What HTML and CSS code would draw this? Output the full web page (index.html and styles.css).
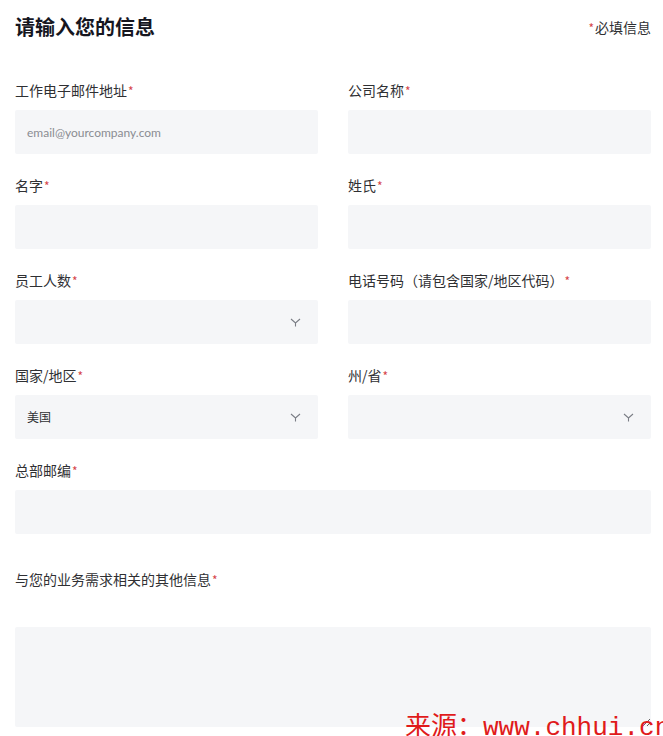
FILE: index.html
```html
<!DOCTYPE html>
<html lang="zh-CN">
<head>
    <meta charset="UTF-8">
    <meta name="viewport" content="width=device-width, initial-scale=1.0">
    <title>请输入您的信息</title>
    <link rel="stylesheet" href="styles.css">
</head>
<body>
    <form class="info-form">
        <div class="form-head">
            <h1>请输入您的信息</h1>
            <span class="required-note"><i>*</i>必填信息</span>
        </div>

        <div class="form-grid">
            <div class="field">
                <label>工作电子邮件地址<i>*</i></label>
                <input type="email" placeholder="email@yourcompany.com">
            </div>
            <div class="field">
                <label>公司名称<i>*</i></label>
                <input type="text">
            </div>

            <div class="field">
                <label>名字<i>*</i></label>
                <input type="text">
            </div>
            <div class="field">
                <label>姓氏<i>*</i></label>
                <input type="text">
            </div>

            <div class="field">
                <label>员工人数<i>*</i></label>
                <div class="select-wrap">
                    <select><option></option></select>
                    <svg class="chevron" width="11" height="9" viewBox="0 0 11 9"><path d="M1 1 L5.5 5 L10 1 M5.5 5 L5.5 8.5" fill="none" stroke="#7a7d85" stroke-width="1.1"/></svg>
                </div>
            </div>
            <div class="field">
                <label>电话号码（请包含国家/地区代码）<i>*</i></label>
                <input type="tel">
            </div>

            <div class="field">
                <label>国家/地区<i>*</i></label>
                <div class="select-wrap">
                    <select><option>美国</option></select>
                    <svg class="chevron" width="11" height="9" viewBox="0 0 11 9"><path d="M1 1 L5.5 5 L10 1 M5.5 5 L5.5 8.5" fill="none" stroke="#7a7d85" stroke-width="1.1"/></svg>
                </div>
            </div>
            <div class="field">
                <label>州/省<i>*</i></label>
                <div class="select-wrap">
                    <select><option></option></select>
                    <svg class="chevron" width="11" height="9" viewBox="0 0 11 9"><path d="M1 1 L5.5 5 L10 1 M5.5 5 L5.5 8.5" fill="none" stroke="#7a7d85" stroke-width="1.1"/></svg>
                </div>
            </div>

            <div class="field wide">
                <label>总部邮编<i>*</i></label>
                <input type="text">
            </div>

            <div class="field wide notes">
                <label>与您的业务需求相关的其他信息<i>*</i></label>
                <textarea></textarea>
            </div>
        </div>
    </form>

    <!-- 水印 -->
    <div class="watermark">来源：www.chhui.cn</div>
</body>
</html>
```

FILE: styles.css
```css
html {
    overflow: hidden;
}

body {
    margin: 0;
    background: #ffffff;
    font-family: Lato, "Noto Sans CJK SC", sans-serif;
    color: #2f3033;
    position: relative;
    height: 736px;
}

.info-form {
    padding: 13px 12px 0 15px;
}

.form-head {
    display: flex;
    justify-content: space-between;
    align-items: center;
    height: 28px;
}

.form-head h1 {
    margin: 0;
    font-size: 20px;
    font-weight: 700;
    color: #16161f;
    line-height: 28px;
    font-family: "Noto Sans CJK SC", sans-serif;
}

.required-note {
    font-size: 14px;
    color: #2f3033;
    font-family: "Noto Sans CJK SC", sans-serif;
}

.required-note i,
.field label i {
    font-style: normal;
    color: #d6454a;
    font-size: 12px;
    margin: 0 1px;
}

.form-grid {
    display: grid;
    grid-template-columns: 303px 303px;
    column-gap: 30px;
    row-gap: 21px;
    margin-top: 39px;
}

.field {
    display: flex;
    flex-direction: column;
}

.field.wide {
    grid-column: 1 / 3;
}

.field label {
    font-size: 14px;
    line-height: 20px;
    height: 20px;
    margin-bottom: 10px;
    color: #2f3033;
    font-family: "Noto Sans CJK SC", sans-serif;
}

.field input,
.field select,
.field textarea {
    box-sizing: border-box;
    width: 100%;
    height: 44px;
    border: none;
    border-radius: 2px;
    background: #f5f6f8;
    padding: 0 12px;
    font-size: 12px;
    color: #2f3033;
    font-family: Lato, "Noto Sans CJK SC", sans-serif;
    outline: none;
}

.field input::placeholder {
    color: #8a8c92;
    font-size: 12px;
}

.select-wrap {
    position: relative;
}

.field select {
    appearance: none;
    -webkit-appearance: none;
}

.chevron {
    position: absolute;
    right: 17px;
    top: 18px;
}

.field.notes {
    margin-top: 14px;
}

.field.notes label {
    margin-bottom: 38px;
}

.field textarea {
    height: 100px;
    padding: 10px 12px;
}

.watermark {
    position: absolute;
    left: 405px;
    top: 715px;
    white-space: nowrap;
    font-family: "Liberation Mono", "Noto Sans CJK SC", monospace;
    font-size: 26px;
    line-height: 1;
    color: #e01b1b;
}
```
